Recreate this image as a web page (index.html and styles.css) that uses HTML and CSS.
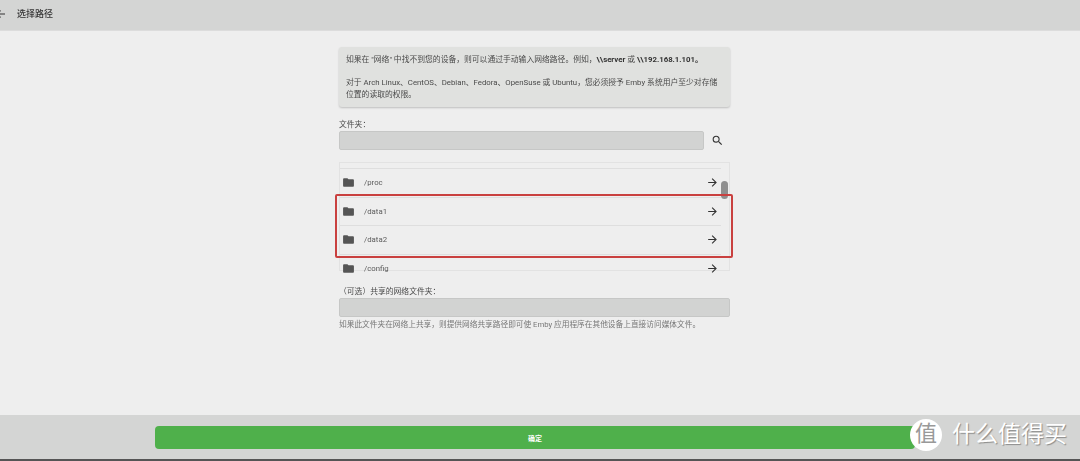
FILE: index.html
```html
<!DOCTYPE html>
<html lang="zh">
<head>
    <meta charset="UTF-8">
    <title>选择路径</title>
    <link rel="stylesheet" href="styles.css">
</head>
<body>

    <header class="top-bar">
        <svg class="back-icon" viewBox="0 0 10 10"><path d="M9 5H1M4.500 1.500L1 5l3.500 3.500" fill="none" stroke="#333" stroke-width="1.200"/></svg>
        <span class="top-title">选择路径</span>
    </header>

    <main class="content">
        <div class="column">
            <div class="info-box">
                <p>如果在 "网络" 中找不到您的设备，则可以通过手动输入网络路径。例如，<b>\\server</b> 或 <b>\\192.168.1.101。</b></p>
                <p>对于 Arch Linux、CentOS、Debian、Fedora、OpenSuse 或 Ubuntu，您必须授予 Emby 系统用户至少对存储位置的读取的权限。</p>
            </div>

            <label class="field-label">文件夹：</label>
            <div class="path-row">
                <div class="text-input"></div>
                <svg class="search-icon" viewBox="0 0 24 24"><path d="M15.500 14h-.79l-.28-.27A6.470 6.470 0 0 0 16 9.500 6.500 6.500 0 1 0 9.500 16c1.610 0 3.090-.59 4.230-1.570l.27.28v.79l5 4.990L20.490 19l-4.990-5zm-6 0C7.010 14 5 11.990 5 9.500S7.010 5 9.500 5 14 7.010 14 9.500 11.990 14 9.500 14z" fill="#333"/></svg>
            </div>

            <div class="folder-list">
                <div class="folder-item">
                    <svg class="folder-icon" viewBox="0 0 24 24"><path d="M10 4H4c-1.100 0-2 .9-2 2v12c0 1.100.9 2 2 2h16c1.100 0 2-.9 2-2V8c0-1.100-.9-2-2-2h-8l-2-2z"/></svg>
                    <span class="folder-name">/proc</span>
                    <svg class="arrow-icon" viewBox="0 0 24 24"><path d="M12 4l-1.410 1.410L16.170 11H4v2h12.170l-5.580 5.590L12 20l8-8z"/></svg>
                </div>
                <div class="folder-item">
                    <svg class="folder-icon" viewBox="0 0 24 24"><path d="M10 4H4c-1.100 0-2 .9-2 2v12c0 1.100.9 2 2 2h16c1.100 0 2-.9 2-2V8c0-1.100-.9-2-2-2h-8l-2-2z"/></svg>
                    <span class="folder-name">/data1</span>
                    <svg class="arrow-icon" viewBox="0 0 24 24"><path d="M12 4l-1.410 1.410L16.170 11H4v2h12.170l-5.580 5.590L12 20l8-8z"/></svg>
                </div>
                <div class="folder-item">
                    <svg class="folder-icon" viewBox="0 0 24 24"><path d="M10 4H4c-1.100 0-2 .9-2 2v12c0 1.100.9 2 2 2h16c1.100 0 2-.9 2-2V8c0-1.100-.9-2-2-2h-8l-2-2z"/></svg>
                    <span class="folder-name">/data2</span>
                    <svg class="arrow-icon" viewBox="0 0 24 24"><path d="M12 4l-1.410 1.410L16.170 11H4v2h12.170l-5.580 5.590L12 20l8-8z"/></svg>
                </div>
                <div class="folder-item">
                    <svg class="folder-icon" viewBox="0 0 24 24"><path d="M10 4H4c-1.100 0-2 .9-2 2v12c0 1.100.9 2 2 2h16c1.100 0 2-.9 2-2V8c0-1.100-.9-2-2-2h-8l-2-2z"/></svg>
                    <span class="folder-name">/config</span>
                    <svg class="arrow-icon" viewBox="0 0 24 24"><path d="M12 4l-1.410 1.410L16.170 11H4v2h12.170l-5.580 5.590L12 20l8-8z"/></svg>
                </div>
                <div class="scroll-thumb"></div>
                <div class="red-mark"></div>
            </div>

            <label class="field-label share-label">（可选）共享的网络文件夹：</label>
            <div class="text-input"></div>
            <p class="help-text">如果此文件夹在网络上共享，则提供网络共享路径即可使 Emby 应用程序在其他设备上直接访问媒体文件。</p>
        </div>
    </main>

    <footer class="bottom-bar">
        <button class="ok-btn">确定</button>
        <div class="watermark">
            <span class="wm-circle">值</span>
            <span class="wm-text">什么值得买</span>
        </div>
    </footer>

</body>
</html>
```

FILE: styles.css
```css
* {
    box-sizing: border-box;
}
html, body {
    height: 100%;
}
body {
    margin: 0;
    display: flex;
    flex-direction: column;
    background-color: #eeeeee;
    color: #4a4a4a;
    font-family: Roboto, "Noto Sans CJK SC", sans-serif;
    font-size: 7.800px;
}
.top-bar {
    height: 31px;
    flex: none;
    display: flex;
    align-items: center;
    gap: 11px;
    background-color: #d4d5d4;
    border-bottom: 1px solid #dcdcdc;
    padding-bottom: 3px;
}
.back-icon {
    width: 10px;
    height: 10px;
    margin-left: -4px;
}
.top-title {
    font-size: 9px;
    font-weight: 500;
    color: #333;
    filter: blur(0.3px);
}
.content {
    flex: 1;
    display: flex;
    justify-content: center;
    padding-top: 16px;
    padding-right: 11px;
}
.column {
    width: 391px;
    filter: blur(0.3px);
}
.info-box {
    height: 60px;
    padding: 7px 7px 0;
    background-color: #e0e1df;
    border-radius: 3px;
    box-shadow: 0 1px 2px rgba(0,0,0,0.2);
    line-height: 12px;
}
.info-box p {
    margin: 0 0 11px;
}
.info-box b {
    color: #333;
}
.field-label {
    display: block;
    height: 10px;
    margin-top: 13px;
    margin-bottom: 1px;
    line-height: 10px;
}
.path-row {
    display: flex;
    align-items: center;
    gap: 7px;
}
.path-row .text-input {
    width: 365px;
    flex: none;
}
.text-input {
    height: 19px;
    background-color: #d2d3d2;
    border: 1px solid #c6c7c6;
    border-radius: 2px;
}
.search-icon {
    width: 13px;
    height: 13px;
}
.folder-list {
    position: relative;
    height: 109px;
    margin-top: 12px;
    padding-top: 5px;
    padding-right: 8px;
    border: 1px solid #e2e2e2;
}
.folder-item {
    height: 28.500px;
    display: flex;
    align-items: center;
    padding-left: 2px;
    padding-right: 2px;
    border-top: 1px solid #dedede;
}
.folder-item:last-of-type {
    height: 16.500px;
    overflow: hidden;
    align-items: flex-start;
    padding-top: 5px;
}
.folder-icon {
    width: 13px;
    height: 13px;
    fill: #555;
    flex: none;
}
.folder-name {
    flex: 1;
    margin-left: 9px;
    color: #5c5c5c;
}
.arrow-icon {
    width: 13px;
    height: 13px;
    fill: #333;
    flex: none;
}
.scroll-thumb {
    position: absolute;
    top: 18px;
    right: 1px;
    width: 7px;
    height: 18px;
    background-color: #8f8f8f;
    border-radius: 4px;
}
.red-mark {
    position: absolute;
    top: 31px;
    left: -5px;
    right: -4px;
    height: 64px;
    border: 2px solid #c9403f;
    border-radius: 2px;
}
.share-label {
    margin-top: 16px;
    margin-bottom: 1px;
}
.help-text {
    margin: 2px 0 0;
    font-size: 7.700px;
    line-height: 12px;
    color: #777;
}
.bottom-bar {
    height: 46px;
    flex: none;
    position: relative;
    padding: 11px 0 0 155px;
    background-color: #d4d5d4;
    border-bottom: 2px solid #555;
}
.ok-btn {
    display: block;
    width: 760px;
    height: 23px;
    padding: 0;
    border: none;
    border-radius: 4px;
    background-color: #4fb04b;
    color: white;
    font-family: inherit;
    font-size: 7px;
    font-weight: bold;
}
.watermark {
    position: absolute;
    top: 4px;
    left: 910px;
    display: flex;
    align-items: center;
    gap: 10px;
}
.wm-circle {
    width: 32px;
    height: 32px;
    border-radius: 50%;
    background-color: white;
    color: #999;
    font-size: 22px;
    line-height: 30px;
    text-align: center;
}
.wm-text {
    color: white;
    font-size: 23px;
    line-height: 32px;
    text-shadow: 1px 1px 1px rgba(0,0,0,0.35);
}
```
